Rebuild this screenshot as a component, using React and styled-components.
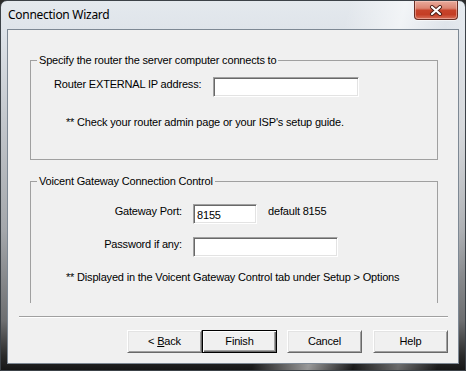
import React from "react";
import styled, { createGlobalStyle } from "styled-components";

const Global = createGlobalStyle`
  html, body { margin: 0; padding: 0; background: #2b2b2b; overflow: hidden; }
  * { box-sizing: border-box; }
`;

const Window = styled.div`
  width: 466px;
  height: 371px;
  display: flex;
  flex-direction: column;
  border: 1px solid #3c4248;
  border-radius: 7px 7px 0 0;
  background:
    linear-gradient(105deg, rgba(255,255,255,0) 62%, rgba(255,255,255,0.55) 72%, rgba(255,255,255,0) 80%, rgba(255,255,255,0.35) 88%, rgba(255,255,255,0) 95%),
    linear-gradient(to bottom, #e4e9ee 0px, #dfe4ea 28px, #c6cacf 110px, #a4a7ab 230px, #6d6e70 320px, #2a2a2a 355px, #141414 371px);
  font-family: "Liberation Sans", Arial, sans-serif;
  font-size: 11px;
  letter-spacing: -0.18px;
  color: #000;
`;

const TitleBar = styled.div`
  height: 28px;
  display: flex;
  align-items: flex-start;
  justify-content: space-between;
  padding: 0 7px;
`;

const Title = styled.div`
  font-family: "Noto Sans", "Open Sans", sans-serif;
  font-size: 12px;
  letter-spacing: -0.28px;
  line-height: 27px;
  color: #000;
`;

const CloseButton = styled.div`
  width: 44px;
  height: 19px;
  border: 1px solid #6a2e24;
  border-top: none;
  border-radius: 0 0 4px 4px;
  background: linear-gradient(to bottom, #e9ab9c 0%, #dc8572 40%, #c7432a 52%, #c43e25 75%, #d8705a 100%);
  box-shadow: inset 0 0 0 1px rgba(255,220,210,0.45), 0 1px 0 rgba(255,255,255,0.6);
  display: flex;
  align-items: center;
  justify-content: center;
`;

const Client = styled.div`
  flex: 1;
  margin: 0 6px 6px 6px;
  border: 1px solid #7d8894;
  background: #f0f0f0;
  display: flex;
  flex-direction: column;
`;

const Page = styled.div`
  height: 273px;
  overflow: hidden;
  padding: 30px 20px 0 22px;
  display: flex;
  flex-direction: column;
`;

const GroupBox = styled.div`
  border: 1px solid #a0a0a0;
  margin-top: ${(p) => p.$gap || 0}px;
  height: ${(p) => p.$height}px;
  flex-shrink: 0;
  display: flex;
  flex-direction: column;
`;

const GroupTitle = styled.div`
  margin: -7px 0 0 6px;
  padding: 0 2px;
  align-self: flex-start;
  background: #f0f0f0;
  line-height: 13px;
`;

const IpRow = styled.div`
  display: flex;
  align-items: flex-start;
  margin-top: 10px;
  padding-left: 23px;
`;

const RowLabel = styled.div`
  width: ${(p) => p.$width}px;
  line-height: 14px;
  text-align: ${(p) => p.$align || "left"};
  flex-shrink: 0;
`;

const TextBox = styled.div`
  width: ${(p) => p.$width}px;
  height: 20px;
  background: #fff;
  border: 1px solid;
  border-color: #a0a0a0 #ffffff #ffffff #a0a0a0;
  box-shadow: inset 1px 1px 0 #696969, inset -1px -1px 0 #e3e3e3;
  padding: 3px 0 0 3px;
  line-height: 14px;
  font-size: 11px;
`;

const Note = styled.div`
  line-height: 13px;
  padding-left: 35px;
  margin-top: ${(p) => p.$gap}px;
`;

const FormGrid = styled.div`
  display: grid;
  grid-template-columns: 151px auto;
  column-gap: 11px;
  row-gap: 13px;
  margin-top: 16px;
  align-items: start;
`;

const FieldCell = styled.div`
  display: flex;
  align-items: flex-start;
`;

const Hint = styled.div`
  margin-left: 11px;
  line-height: 14px;
`;

const Separator = styled.div`
  margin: 13px 10px 0 11px;
  height: 2px;
  border-top: 1px solid #a0a0a0;
  border-bottom: 1px solid #ffffff;
`;

const ButtonRow = styled.div`
  display: flex;
  justify-content: flex-end;
  margin-top: 12px;
  padding-right: 10px;
`;

const Button = styled.div`
  width: 75px;
  height: 23px;
  margin-left: ${(p) => p.$gap || 0}px;
  background: #f0f0f0;
  border: 1px solid;
  border-color: ${(p) => (p.$default ? "#000" : "#fff #696969 #696969 #fff")};
  box-shadow: ${(p) =>
    p.$default
      ? "inset 1px 1px 0 #fff, inset -1px -1px 0 #696969, inset -2px -2px 0 #a0a0a0"
      : "inset 1px 1px 0 #e3e3e3, inset -1px -1px 0 #a0a0a0"};
  display: flex;
  align-items: center;
  justify-content: center;
  line-height: 13px;
`;

const Mnemonic = styled.span`
  text-decoration: underline;
`;

function CloseGlyph() {
  return (
    <svg width="14" height="11" viewBox="0 0 14 11">
      <path d="M3 2 L11 9 M11 2 L3 9" stroke="#4a1c14" strokeWidth="4" strokeLinecap="round" />
      <path d="M3 2 L11 9 M11 2 L3 9" stroke="#ffffff" strokeWidth="2.2" strokeLinecap="round" />
    </svg>
  );
}

export default function App() {
  return (
    <>
      <Global />
      <Window>
        <TitleBar>
          <Title>Connection Wizard</Title>
          <CloseButton>
            <CloseGlyph />
          </CloseButton>
        </TitleBar>
        <Client>
          <Page>
            <GroupBox $height={100}>
              <GroupTitle>Specify the router the server computer connects to</GroupTitle>
              <IpRow>
                <RowLabel $width={159}>Router EXTERNAL IP address:</RowLabel>
                <TextBox $width={146} />
              </IpRow>
              <Note $gap={19}>** Check your router admin page or your ISP's setup guide.</Note>
            </GroupBox>
            <GroupBox $gap={21} $height={140}>
              <GroupTitle>Voicent Gateway Connection Control</GroupTitle>
              <FormGrid>
                <RowLabel $width={151} $align="right">Gateway Port:</RowLabel>
                <FieldCell>
                  <TextBox $width={64}>8155</TextBox>
                  <Hint>default 8155</Hint>
                </FieldCell>
                <RowLabel $width={151} $align="right">Password if any:</RowLabel>
                <FieldCell>
                  <TextBox $width={145} />
                </FieldCell>
              </FormGrid>
              <Note $gap={14}>** Displayed in the Voicent Gateway Control tab under Setup &gt; Options</Note>
            </GroupBox>
          </Page>
          <Separator />
          <ButtonRow>
            <Button>
              &lt;&nbsp;<Mnemonic>B</Mnemonic>ack
            </Button>
            <Button $default>Finish</Button>
            <Button $gap={10}>Cancel</Button>
            <Button $gap={11}>Help</Button>
          </ButtonRow>
        </Client>
      </Window>
    </>
  );
}
